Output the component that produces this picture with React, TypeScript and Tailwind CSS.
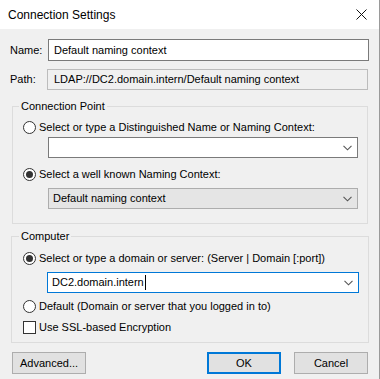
const font = { fontFamily: '"Liberation Sans", Arial, sans-serif' };

function Chevron() {
  return (
    <svg width="9" height="6" viewBox="0 0 9 6" className="shrink-0">
      <polyline points="0.5,0.8 4.5,4.8 8.5,0.8" fill="none" stroke="#555" strokeWidth="1.1" />
    </svg>
  );
}

function Radio({ checked }: { checked?: boolean }) {
  return (
    <span className="w-[13px] h-[13px] rounded-full border border-[#333] bg-white flex items-center justify-center shrink-0">
      {checked && <span className="w-[7px] h-[7px] rounded-full bg-[#333]" />}
    </span>
  );
}

function Combo({
  text,
  disabled,
  focused,
}: {
  text?: string;
  disabled?: boolean;
  focused?: boolean;
}) {
  const box = disabled
    ? "bg-[#e5e5e5] border-[#adadad]"
    : focused
      ? "bg-white border-[#0078d7]"
      : "bg-white border-[#7a7a7a]";
  return (
    <div className={`ml-[29px] mr-[9px] h-[21px] border flex items-center pl-[4px] pr-[5px] ${box}`}>
      <span className="flex-1 flex items-center leading-none">
        {text}
        {focused && <span className="w-px h-[15px] bg-black ml-[1px]" />}
      </span>
      <Chevron />
    </div>
  );
}

export default function App() {
  return (
    <div
      className="w-[380px] h-[379px] bg-[#f0f0f0] text-[11px] text-black border-r border-r-[#9a9a9a] overflow-hidden"
      style={font}
    >
      {/* Title bar */}
      <div className="h-[29px] bg-white flex items-center pl-[8px] pr-[12px] text-[12px]">
        <span className="flex-1">Connection Settings</span>
        <svg width="11" height="11" viewBox="0 0 11 11">
          <path d="M0.5 0.5 L10.5 10.5 M10.5 0.5 L0.5 10.5" stroke="#111" strokeWidth="1" />
        </svg>
      </div>

      <div className="pl-[10px] pr-[10px]">
        {/* Name */}
        <div className="mt-[10px] flex items-center">
          <span className="w-[38px]">Name:</span>
          <div className="flex-1 h-[22px] border border-[#7a7a7a] bg-white flex items-center pl-[5px]">
            Default naming context
          </div>
        </div>

        {/* Path */}
        <div className="mt-[8px] flex items-center">
          <span className="w-[37px]">Path:</span>
          <div className="flex-1 mr-[1px] h-[21px] border border-[#bcbcbc] bg-[#f0f0f0] flex items-center pl-[6px]">
            LDAP://DC2.domain.intern/Default naming context
          </div>
        </div>

        {/* Connection Point */}
        <fieldset className="mt-[8px] ml-[2px] mr-[1px] border border-[#dcdcdc] pl-[6px] pb-[14px]">
          <legend className="px-[2px] leading-[16px]">Connection Point</legend>
          <div className="mt-[5px] h-[16px] flex items-center gap-[3px] pl-[4px]">
            <Radio />
            <span>Select or type a Distinguished Name or Naming Context:</span>
          </div>
          <div className="mt-[2px]">
            <Combo />
          </div>
          <div className="mt-[8px] h-[16px] flex items-center gap-[3px] pl-[4px]">
            <Radio checked />
            <span>Select a well known Naming Context:</span>
          </div>
          <div className="mt-[6px]">
            <Combo text="Default naming context" disabled />
          </div>
        </fieldset>

        {/* Computer */}
        <fieldset className="mt-[4px] ml-[1px] border border-[#dcdcdc] pl-[7px] pb-[7px]">
          <legend className="px-[2px] leading-[16px]">Computer</legend>
          <div className="mt-[6px] h-[16px] flex items-center gap-[3px] pl-[4px]">
            <Radio checked />
            <span>Select or type a domain or server: (Server | Domain [:port])</span>
          </div>
          <div className="mt-[6px] -ml-[1px]">
            <Combo text="DC2.domain.intern" focused />
          </div>
          <div className="mt-[5px] h-[16px] flex items-center gap-[3px] pl-[4px]">
            <Radio />
            <span>Default (Domain or server that you logged in to)</span>
          </div>
          <div className="mt-[5px] h-[16px] flex items-center gap-[3px] pl-[4px]">
            <span className="w-[13px] h-[13px] border border-[#333] bg-white shrink-0" />
            <span>Use SSL-based Encryption</span>
          </div>
        </fieldset>

        {/* Buttons */}
        <div className="mt-[9px] flex items-center pl-[2px] pr-[1px]">
          <button className="w-[74px] h-[22px] border border-[#adadad] bg-[#e1e1e1] flex items-center justify-center">
            Advanced...
          </button>
          <div className="flex-1" />
          <button className="w-[74px] h-[22px] border-2 border-[#0078d7] bg-[#e1e1e1] flex items-center justify-center">
            OK
          </button>
          <button className="ml-[13px] w-[74px] h-[22px] border border-[#adadad] bg-[#e1e1e1] flex items-center justify-center">
            Cancel
          </button>
        </div>
      </div>
    </div>
  );
}
